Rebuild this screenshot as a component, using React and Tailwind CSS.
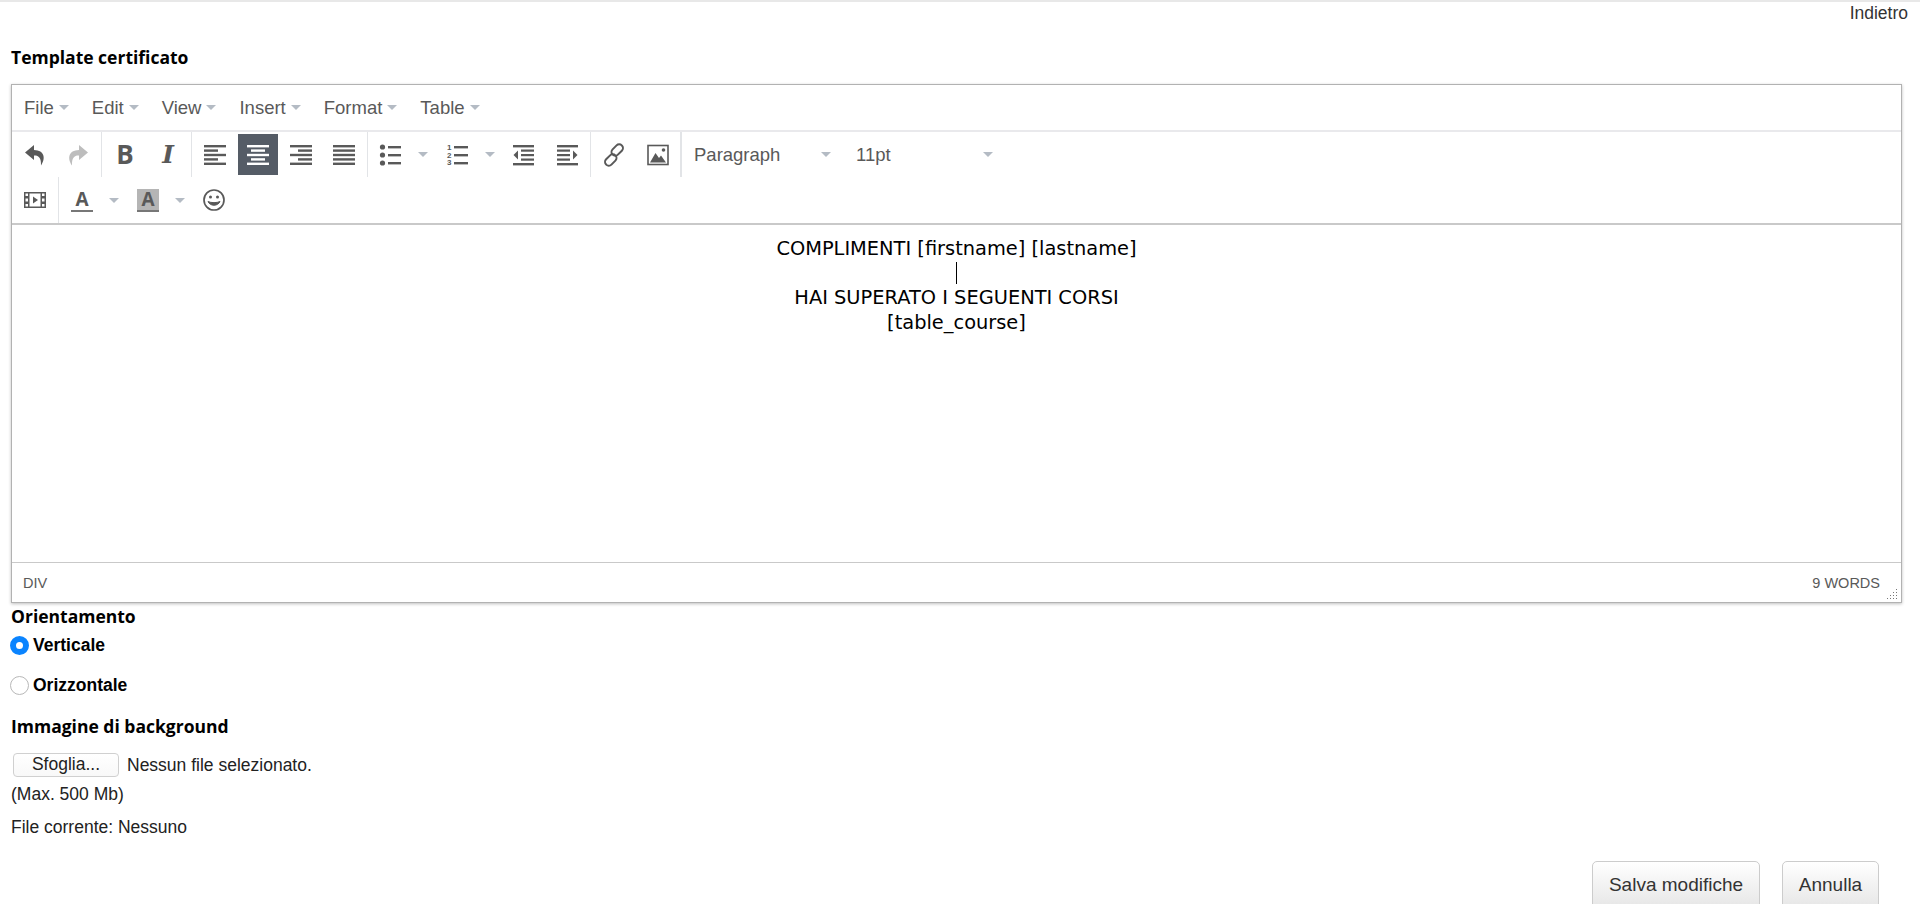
import React from 'react'

const gray = '#595959'

const Caret = ({ className = '' }) => (
  <span className={`inline-block w-0 h-0 border-x-[5px] border-x-transparent border-t-[5px] border-t-[#b4bbc4] ${className}`} />
)

const Lines = ({ rows, fill = gray }) => (
  <svg width="24" height="24" viewBox="0 0 24 24" fill={fill}>
    {rows.map(([x, w], i) => (
      <rect key={i} x={x} y={2 + i * 4.4} width={w} height="2.4" />
    ))}
  </svg>
)

const Undo = ({ flip, color }) => (
  <svg width="24" height="24" viewBox="0 0 24 24" fill={color} className={flip ? '-scale-x-100' : ''}>
    <path d="M11 2 L2 9.5 L11 17 V12.4 C15.5 12.2 18.4 14.5 18 22.5 C22.8 15.5 21.8 7.4 11 7 Z" />
  </svg>
)

const Bullets = () => (
  <svg width="24" height="24" viewBox="0 0 24 24" fill={gray}>
    <circle cx="3.5" cy="4" r="2.6" /><circle cx="3.5" cy="12" r="2.6" /><circle cx="3.5" cy="20" r="2.6" />
    <rect x="9" y="3" width="13" height="2.4" /><rect x="9" y="11" width="13" height="2.4" /><rect x="9" y="19" width="13" height="2.4" />
  </svg>
)

const Numbers = () => (
  <svg width="24" height="24" viewBox="0 0 24 24" fill={gray}>
    <text x="1" y="7" fontSize="8" fontWeight="700" fontFamily="Liberation Sans, sans-serif">1</text>
    <text x="1" y="14.5" fontSize="8" fontWeight="700" fontFamily="Liberation Sans, sans-serif">2</text>
    <text x="1" y="22" fontSize="8" fontWeight="700" fontFamily="Liberation Sans, sans-serif">3</text>
    <rect x="8" y="3" width="14" height="2.4" /><rect x="8" y="11" width="14" height="2.4" /><rect x="8" y="19" width="14" height="2.4" />
  </svg>
)

const Indent = ({ flip }) => (
  <svg width="24" height="24" viewBox="0 0 24 24" fill={gray} className={flip ? '-scale-x-100' : ''}>
    <rect x="1" y="2" width="21" height="2.4" /><rect x="9" y="6.5" width="13" height="2.2" />
    <rect x="9" y="11" width="13" height="2.2" /><rect x="9" y="15.5" width="13" height="2.2" />
    <rect x="1" y="20" width="21" height="2.4" />
    <path d="M6 7.5 L1.5 12 L6 16.5 Z" />
  </svg>
)

const LinkIcon = () => (
  <svg width="24" height="24" viewBox="0 0 24 24" fill="none" stroke={gray} strokeWidth="2">
    <rect x="11.5" y="0.5" width="7.5" height="13" rx="3.7" transform="rotate(45 15.2 7)" />
    <rect x="5" y="10.5" width="7.5" height="13" rx="3.7" transform="rotate(45 8.8 17)" />
  </svg>
)

const ImageIcon = () => (
  <svg width="24" height="24" viewBox="0 0 24 24" className="translate-x-[1px]">
    <rect x="2" y="2.5" width="20" height="19" fill="none" stroke={gray} strokeWidth="1.6" />
    <path d="M4 19.5 L9.5 10 L13 15 L15 12.5 L20 19.5 Z" fill={gray} />
    <circle cx="17.5" cy="7" r="1.8" fill={gray} />
  </svg>
)

const FilmIcon = () => (
  <svg width="24" height="24" viewBox="0 0 24 24" fill={gray}>
    <path fillRule="evenodd" d="M1 4 H23 V20 H1 Z M6.5 5.5 V18.5 H17.5 V5.5 Z M2.5 5.5 V8 H5 V5.5 Z M2.5 10.5 V13.5 H5 V10.5 Z M2.5 16 V18.5 H5 V16 Z M19 5.5 V8 H21.5 V5.5 Z M19 10.5 V13.5 H21.5 V10.5 Z M19 16 V18.5 H21.5 V16 Z" />
    <path d="M10 8.5 L15 12 L10 15.5 Z" />
  </svg>
)

const Smile = () => (
  <svg width="24" height="24" viewBox="0 0 24 24" fill="none" stroke={gray} strokeWidth="1.7">
    <circle cx="12" cy="12" r="10" />
    <circle cx="8.5" cy="9" r="1.5" fill={gray} stroke="none" />
    <circle cx="15.5" cy="9" r="1.5" fill={gray} stroke="none" />
    <path d="M6 13.5 C8 18.5 16 18.5 18 13.5 C15 15 9 15 6 13.5 Z" fill={gray} strokeWidth="1" />
  </svg>
)

const Btn = ({ children, active }) => (
  <div className={`w-[40px] h-[41px] flex items-center justify-center ${active ? 'bg-[#555c66]' : ''}`}>{children}</div>
)

const Group = ({ children, last }) => (
  <div className={`h-full flex items-center gap-[3px] pl-[3px] pr-[3px] ${last ? '' : 'border-r border-[#e2e4e7]'}`}>{children}</div>
)

const Split = ({ children, wide }) => (
  <div className="flex items-center">
    <Btn>{children}</Btn>
    <div className={`${wide ? 'w-[24px]' : 'w-[23px]'} flex justify-center`}><Caret /></div>
  </div>
)

const Listbox = ({ label }) => (
  <div className="w-[151px] flex items-center justify-between pl-[12px] pr-[2px] text-[18.5px] text-[#595959]">
    <span>{label}</span>
    <Caret />
  </div>
)

const ColorA = ({ bg }) => (
  <div className={`w-[22px] h-[23px] flex flex-col items-center ${bg}`}>
    <span className="text-[19px] leading-[21px] font-bold text-[#595959] font-['Open_Sans',sans-serif]">A</span>
    <span className="w-full h-[2px] bg-[#777]" />
  </div>
)

const menus = ['File', 'Edit', 'View', 'Insert', 'Format', 'Table']

const App = () => {
  return (
    <div className="h-screen w-full overflow-hidden bg-white text-black font-['Liberation_Sans',sans-serif]">
      <div className="h-[2px] bg-[#e8e8e8]" />
      <div className="flex justify-end pr-[12px] text-[17.5px] leading-[22px] text-[#333]">
        <a href="#">Indietro</a>
      </div>
      <h3 className="mt-[21px] pl-[11px] text-[17.5px] leading-[24px] font-bold font-['Open_Sans',sans-serif]">Template certificato</h3>

      <div className="mt-[15px] ml-[11px] w-[1891px] h-[519px] flex flex-col border border-[#b2b2b2] shadow-[0_1px_3px_rgba(0,0,0,0.25)]">
        <div className="h-[47px] flex items-center gap-[23px] pl-[12px] border-b-2 border-[#e9e9ec] text-[18.5px] text-[#595959]">
          {menus.map((m) => (
            <div key={m} className="flex items-center gap-[5px]">
              <span>{m}</span>
              <Caret />
            </div>
          ))}
        </div>

        <div className="h-[45px] flex items-center">
          <Group>
            <Btn><Undo color={gray} /></Btn>
            <Btn><Undo flip color="#bdbdbd" /></Btn>
          </Group>
          <Group>
            <Btn><span className="text-[26px] font-bold text-[#595959] font-['Open_Sans',sans-serif]">B</span></Btn>
            <Btn><span className="text-[25px] font-bold italic text-[#595959] font-['DejaVu_Serif',serif]">I</span></Btn>
          </Group>
          <Group>
            <Btn><Lines rows={[[1, 22], [1, 14], [1, 22], [1, 14], [1, 22]]} /></Btn>
            <Btn active><Lines fill="#fff" rows={[[1, 22], [5, 14], [1, 22], [5, 14], [1, 22]]} /></Btn>
            <Btn><Lines rows={[[1, 22], [9, 14], [1, 22], [9, 14], [1, 22]]} /></Btn>
            <Btn><Lines rows={[[1, 22], [1, 22], [1, 22], [1, 22], [1, 22]]} /></Btn>
          </Group>
          <Group>
            <Split wide><Bullets /></Split>
            <Split><Numbers /></Split>
            <Btn><Indent /></Btn>
            <Btn><Indent flip /></Btn>
          </Group>
          <Group>
            <Btn><LinkIcon /></Btn>
            <Btn><ImageIcon /></Btn>
          </Group>
          <div className="flex gap-[11px] border-l border-[#e2e4e7] h-full items-center">
            <Listbox label="Paragraph" />
            <Listbox label="11pt" />
          </div>
        </div>

        <div className="h-[48px] flex items-center border-b-2 border-[#c9c9c9]">
          <Group>
            <Btn><FilmIcon /></Btn>
          </Group>
          <Group last>
            <Split><ColorA /></Split>
            <Split><ColorA bg="bg-[#b5b5b5]" /></Split>
            <Btn><Smile /></Btn>
          </Group>
        </div>

        <div className="flex-1 pt-[12px] text-center text-[19.4px] leading-[24.5px] font-['DejaVu_Sans',sans-serif]">
          <p>COMPLIMENTI [firstname] [lastname]</p>
          <p className="h-[24.5px] flex justify-center"><span className="w-px h-[22px] bg-black" /></p>
          <p>HAI SUPERATO I SEGUENTI CORSI</p>
          <p>[table_course]</p>
        </div>

        <div className="relative h-[40px] flex items-center justify-between pt-[2px] pl-[11px] pr-[21px] border-t border-[#c9c9c9] text-[14.5px] text-[#595959]">
          <span>DIV</span>
          <span>9 WORDS</span>
          <svg className="absolute right-[3px] bottom-[3px]" width="11" height="11" viewBox="0 0 11 11" fill="#777">
            {[[9, 1], [9, 4], [6, 4], [9, 7], [6, 7], [3, 7], [9, 10], [6, 10], [3, 10], [0, 10]].map(([x, y], i) => (
              <rect key={i} x={x} y={y} width="1" height="1" />
            ))}
          </svg>
        </div>
      </div>

      <div className="pl-[11px]">
        <h3 className="mt-[1px] text-[17.5px] leading-[24px] font-bold font-['Open_Sans',sans-serif]">Orientamento</h3>
        <label className="mt-[5px] flex items-center gap-[4px] text-[17.5px] leading-[24px] font-bold -ml-[1px]">
          <input type="radio" name="orient" defaultChecked className="appearance-none w-[19px] h-[19px] rounded-full bg-white border-[6px] border-[#0a84ff]" />
          Verticale
        </label>
        <label className="mt-[16px] flex items-center gap-[4px] text-[17.5px] leading-[24px] font-bold -ml-[1px]">
          <input type="radio" name="orient" className="appearance-none w-[19px] h-[19px] rounded-full bg-white border border-[#b8b8b8]" />
          Orizzontale
        </label>
        <h3 className="mt-[17px] text-[17.5px] leading-[24px] font-bold font-['Open_Sans',sans-serif]">Immagine di background</h3>
        <div className="mt-[14px] flex items-center gap-[8px] text-[17.5px] text-[#222]">
          <button className="ml-[2px] w-[106px] h-[24px] rounded-[4px] border border-[#d0d0d0] bg-gradient-to-b from-white to-[#f8f8f8] text-[17.5px] leading-none">Sfoglia...</button>
          <span>Nessun file selezionato.</span>
        </div>
        <p className="mt-[4px] text-[17.5px] leading-[24px] text-[#222]">(Max. 500 Mb)</p>
        <p className="mt-[9px] text-[17.5px] leading-[24px] text-[#222]">File corrente: Nessuno</p>
      </div>

      <div className="mt-[22px] flex justify-end gap-[22px] pr-[41px]">
        <button className="w-[168px] h-[48px] rounded-[5px] border border-[#ccc] bg-gradient-to-b from-white to-[#e6e6e6] text-[19px] pb-[1px] text-[#333]">Salva modifiche</button>
        <button className="w-[97px] h-[48px] rounded-[5px] border border-[#ccc] bg-gradient-to-b from-white to-[#e6e6e6] text-[19px] pb-[1px] text-[#333]">Annulla</button>
      </div>
    </div>
  )
}

export default App
